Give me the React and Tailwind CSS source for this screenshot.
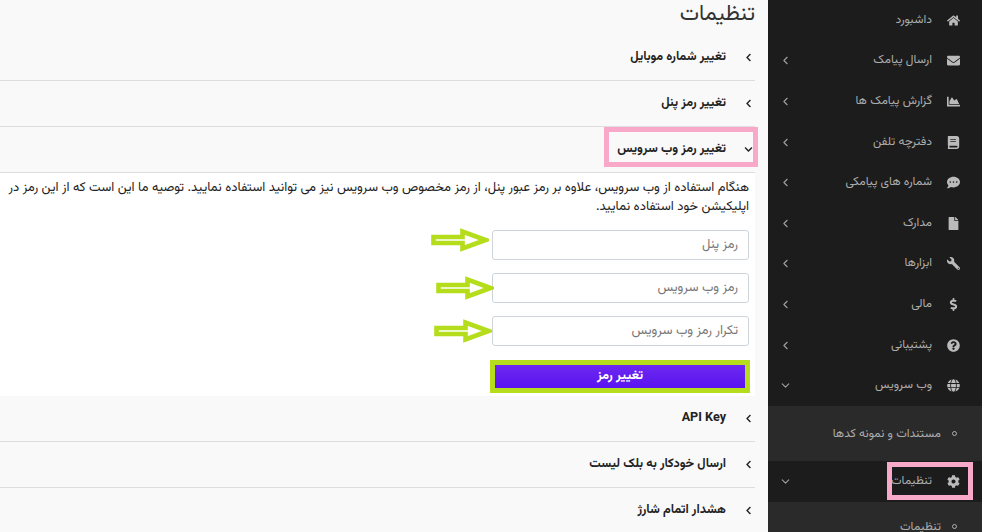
import { ChevronLeft, ChevronDown } from "lucide-react";
import {
  FaHome,
  FaEnvelope,
  FaChartArea,
  FaBook,
  FaCommentDots,
  FaFile,
  FaWrench,
  FaDollarSign,
  FaQuestionCircle,
  FaGlobe,
  FaCog,
  FaChevronLeft,
  FaChevronDown,
} from "react-icons/fa";

const font = "font-['Vazirmatn','Noto_Sans_Arabic','DejaVu_Sans',sans-serif]";

function MenuRow({ icon: Icon, label, arrow, flip }) {
  return (
    <div className="flex h-[40.6px] items-center pr-[22px] pl-[11px] text-[12px] text-[#adadad]">
      <Icon className={"w-[13px] h-[13px] text-[#bababa] shrink-0 " + (flip ? "-scale-x-100" : "")} />
      <span className="mr-[15px] flex-1 -mt-[1px]">{label}</span>
      {arrow === "left" && <ChevronLeft className="w-[13px] h-[13px] text-[#a0a0a0]" />}
      {arrow === "down" && <ChevronDown className="w-[13px] h-[13px] text-[#a0a0a0]" />}
    </div>
  );
}

function SubRow({ label, className }) {
  return (
    <div className={"flex items-center bg-[#2a2a2a] pr-[25px] text-[12px] text-[#adadad] " + className}>
      <span className="w-[5px] h-[5px] rounded-full border border-[#adadad] shrink-0" />
      <span className="mr-[11px]">{label}</span>
    </div>
  );
}

function Sidebar() {
  return (
    <div className="w-[214px] shrink-0 bg-[#1c1c1c] h-[532px] overflow-hidden relative">
      <MenuRow icon={FaHome} label="داشبورد" />
      <MenuRow icon={FaEnvelope} label="ارسال پیامک" arrow="left" />
      <MenuRow icon={FaChartArea} label="گزارش پیامک ها" arrow="left" />
      <MenuRow icon={FaBook} label="دفترچه تلفن" arrow="left" flip />
      <MenuRow icon={FaCommentDots} label="شماره های پیامکی" arrow="left" />
      <MenuRow icon={FaFile} label="مدارک" arrow="left" />
      <MenuRow icon={FaWrench} label="ابزارها" arrow="left" flip />
      <MenuRow icon={FaDollarSign} label="مالی" arrow="left" />
      <MenuRow icon={FaQuestionCircle} label="پشتیبانی" arrow="left" />
      <MenuRow icon={FaGlobe} label="وب سرویس" arrow="down" />
      <SubRow label="مستندات و نمونه کدها" className="h-[55px] pt-[1px]" />
      <MenuRow icon={FaCog} label="تنظیمات" arrow="down" />
      <SubRow label="تنظیمات" className="h-[55px] pb-[5px]" />
      <div className="absolute right-[9px] top-[462px] w-[86px] h-[38px] border-[5px] border-[#f8a8c8]" />
    </div>
  );
}

function AccordionRow({ label, open }) {
  const Icon = open ? FaChevronDown : FaChevronLeft;
  return (
    <div className="flex items-center h-[46px] border-b border-[#dedede] pr-[2px] pb-[1px] text-[12.6px] font-bold text-[#222]">
      <Icon className="w-[9px] h-[9px] shrink-0 text-[#222]" />
      <span className="mr-[18px]">{label}</span>
    </div>
  );
}

function Arrow({ className }) {
  return (
    <svg className={"absolute w-[58px] h-[24px] " + className} viewBox="0 0 58 24" fill="none">
      <path d="M2.500 9h29V3.500l23 8.500-23 8.500V15h-29z" fill="#ffffff" stroke="#b5dd1c" strokeWidth="4.600" />
    </svg>
  );
}

function PasswordField({ placeholder }) {
  return (
    <input
      dir="rtl"
      placeholder={placeholder}
      className="block w-[257px] h-[30px] rounded-[3px] border border-[#ced4da] bg-white px-[10px] text-[13px] placeholder:text-[#777]"
    />
  );
}

export default function App() {
  return (
    <div dir="rtl" className={"flex w-[982px] h-[532px] overflow-hidden bg-[#f9f9f9] " + font}>
      <Sidebar />
      <div className="flex-1 pr-[13px] relative">
        <h1 className="text-[22px] font-normal leading-[30px] text-[#333] h-[35px]">تنظیمات</h1>
        <AccordionRow label="تغییر شماره موبایل" />
        <AccordionRow label="تغییر رمز پنل" />
        <AccordionRow label="تغییر رمز وب سرویس" open />
        <div className="bg-white h-[223px] pt-[6px] pr-[6px] pl-[6px] text-[13px] leading-[19px] text-[#222]">
          <p>
            هنگام استفاده از وب سرویس، علاوه بر رمز عبور پنل، از رمز مخصوص وب سرویس نیز می توانید استفاده نمایید. توصیه ما این است که از این رمز در اپلیکیشن خود استفاده نمایید.
          </p>
          <div className="mt-[13px] flex flex-col gap-[13px]">
            <PasswordField placeholder="رمز پنل" />
            <PasswordField placeholder="رمز وب سرویس" />
            <PasswordField placeholder="تکرار رمز وب سرویس" />
          </div>
          <button className="mt-[14px] -mr-[1px] flex items-center justify-center w-[260px] h-[33px] border-[5px] border-[#b5dd1c] bg-gradient-to-b from-[#6d28f0] to-[#5a10f0] text-[13px] font-bold text-white">
            تغییر رمز
          </button>
        </div>
        <AccordionRow label="API Key" />
        <AccordionRow label="ارسال خودکار به بلک لیست" />
        <AccordionRow label="هشدار اتمام شارژ" />
        <div className="absolute left-[604px] top-[127px] w-[154px] h-[40px] border-[5px] border-[#f8a8c8]" />
        <Arrow className="left-[431px] top-[228px]" />
        <Arrow className="left-[436px] top-[276px]" />
        <Arrow className="left-[434px] top-[319px]" />
      </div>
    </div>
  );
}
